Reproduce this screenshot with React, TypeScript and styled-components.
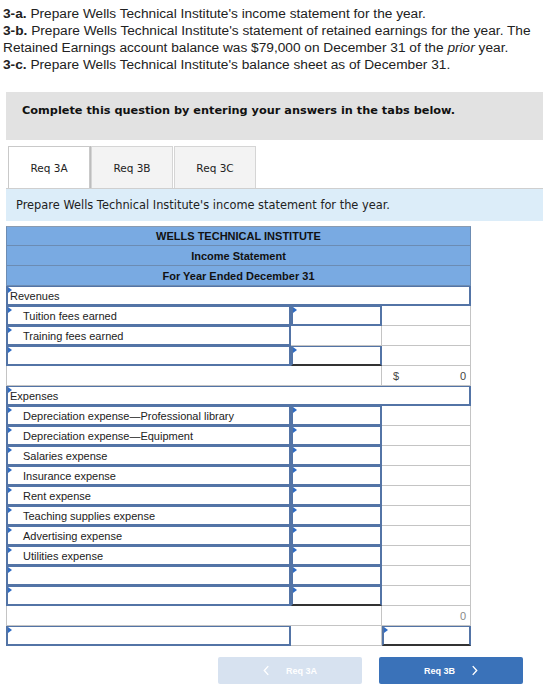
import React from "react";
import styled, { createGlobalStyle, css } from "styled-components";

const GlobalStyle = createGlobalStyle`
  body {
    margin: 0;
    background: #fff;
    font-family: "Liberation Sans", Arial, sans-serif;
    color: #222;
  }
`;

type CellKind = "plain" | "input" | "underline";

interface Row {
  section?: boolean;
  label?: string;
  indent?: boolean;
  labelKind?: "plain" | "input";
  c2?: CellKind;
  c3?: CellKind;
  dollar?: boolean;
  total?: string;
  muted?: boolean;
}

const expenses = [
  "Depreciation expense—Professional library",
  "Depreciation expense—Equipment",
  "Salaries expense",
  "Insurance expense",
  "Rent expense",
  "Teaching supplies expense",
  "Advertising expense",
  "Utilities expense",
];

const rows: Row[] = [
  { section: true, label: "Revenues" },
  { label: "Tuition fees earned", indent: true, labelKind: "input", c2: "input", c3: "plain" },
  { label: "Training fees earned", indent: true, labelKind: "input", c2: "plain", c3: "plain" },
  { label: "", labelKind: "input", c2: "underline", c3: "plain" },
  { label: "", labelKind: "plain", c2: "plain", c3: "plain", dollar: true, total: "0" },
  { section: true, label: "Expenses" },
  ...expenses.map<Row>((e) => ({ label: e, indent: true, labelKind: "input", c2: "input", c3: "plain" })),
  { label: "", labelKind: "input", c2: "input", c3: "plain" },
  { label: "", labelKind: "input", c2: "underline", c3: "plain" },
  { label: "", labelKind: "plain", c2: "plain", c3: "plain", total: "0", muted: true },
  { label: "", labelKind: "input", c2: "plain", c3: "underline" },
];

export default function App() {
  return (
    <Page>
      <GlobalStyle />
      <Prompt>
        <Line>
          <b>3-a.</b> Prepare Wells Technical Institute's income statement for the year.
        </Line>
        <Line>
          <b>3-b.</b> Prepare Wells Technical Institute's statement of retained earnings for the year. The
          Retained Earnings account balance was $79,000 on December 31 of the <i>prior</i> year.
        </Line>
        <Line>
          <b>3-c.</b> Prepare Wells Technical Institute's balance sheet as of December 31.
        </Line>
      </Prompt>

      <Content>
        <Banner>Complete this question by entering your answers in the tabs below.</Banner>

        <Tabs>
          <Tab $active>Req 3A</Tab>
          <Tab>Req 3B</Tab>
          <Tab>Req 3C</Tab>
        </Tabs>

        <InfoBar>Prepare Wells Technical Institute's income statement for the year.</InfoBar>

        <Sheet>
          <HeadRow $first>WELLS TECHNICAL INSTITUTE</HeadRow>
          <HeadRow>Income Statement</HeadRow>
          <HeadRow>For Year Ended December 31</HeadRow>

          {rows.map((r, i) =>
            r.section ? (
              <SheetRow key={i}>
                <SectionCell>{r.label}</SectionCell>
              </SheetRow>
            ) : (
              <SheetRow key={i}>
                <LabelCell $kind={r.labelKind ?? "plain"} $indent={r.indent}>
                  {r.label}
                </LabelCell>
                <AmountCell $kind={r.c2 ?? "plain"} />
                <AmountCell $kind={r.c3 ?? "plain"} $muted={r.muted}>
                  {r.dollar && <Dollar>$</Dollar>}
                  {r.total && <Total>{r.total}</Total>}
                </AmountCell>
              </SheetRow>
            )
          )}
        </Sheet>

        <Nav>
          <NavButton $disabled>
            <Chevron viewBox="0 0 8 12">
              <path d="M6 1 L1.5 6 L6 11" />
            </Chevron>
            Req 3A
          </NavButton>
          <NavButton>
            Req 3B
            <Chevron viewBox="0 0 8 12">
              <path d="M2 1 L6.5 6 L2 11" />
            </Chevron>
          </NavButton>
        </Nav>
      </Content>
    </Page>
  );
}

const Page = styled.div`
  width: 543px;
  overflow: hidden;
  padding-bottom: 16px;
`;

const Prompt = styled.div`
  padding: 5px 0 0 3px;
  font-size: 13.7px;
  line-height: 17px;
  color: #222;
`;

const Line = styled.div`
  b {
    font-weight: bold;
  }
`;

const Content = styled.div`
  padding-left: 6px;
  margin-top: 19px;
`;

const Banner = styled.div`
  background: #e2e2e2;
  height: 48px;
  box-sizing: border-box;
  padding: 12px 0 0 16px;
  font-family: "DejaVu Sans", Verdana, sans-serif;
  font-weight: bold;
  font-size: 11.3px;
  line-height: 14px;
  color: #111;
`;

const Tabs = styled.div`
  display: flex;
  gap: 1px;
  margin: 6px 0 0 2px;
`;

const Tab = styled.div<{ $active?: boolean }>`
  width: 80px;
  height: 41px;
  display: flex;
  align-items: center;
  justify-content: center;
  border: 1px solid #d5d5d5;
  border-bottom: none;
  font-family: "DejaVu Sans", Verdana, sans-serif;
  font-size: 10.5px;
  color: #222;
  background: ${({ $active }) => ($active ? "#fff" : "#f3f3f3")};
  ${({ $active }) =>
    $active &&
    css`
      border-color: #c9c9c9;
      box-shadow: 1px 0 0 #bdbdbd;
    `}
`;

const InfoBar = styled.div`
  background: #dcedf9;
  height: 32px;
  display: flex;
  align-items: center;
  padding-left: 10px;
  font-family: "DejaVu Sans", Verdana, sans-serif;
  font-size: 11.4px;
  color: #222;
  border-top: 1px solid #cfcfcf;
`;

const Sheet = styled.div`
  margin-top: 5px;
  width: 465px;
  font-family: "Liberation Sans", Arial, sans-serif;
  font-size: 11px;
`;

const HeadRow = styled.div<{ $first?: boolean }>`
  height: 20px;
  box-sizing: border-box;
  background: #79aae2;
  border: 1px solid #6c8cb3;
  border-top: ${({ $first }) => ($first ? "1px solid #8a9bb0" : "none")};
  display: flex;
  align-items: center;
  justify-content: center;
  font-weight: bold;
  color: #111;
`;

const SheetRow = styled.div`
  display: grid;
  grid-template-columns: 285px 91px 89px;
  height: 20px;
`;

const marker = css`
  &::before {
    content: "";
    position: absolute;
    left: 0;
    top: 0;
    border-top: 3px solid transparent;
    border-bottom: 3px solid transparent;
    border-left: 4px solid #2f6cc4;
  }
`;

const SectionCell = styled.div`
  grid-column: 1 / 4;
  position: relative;
  box-sizing: border-box;
  border: 2px solid #5374a6;
  border-top-width: 1px;
  background: #fff;
  padding-left: 2px;
  display: flex;
  align-items: center;
  color: #222;
  ${marker}
`;

const LabelCell = styled.div<{ $kind: "plain" | "input"; $indent?: boolean }>`
  position: relative;
  box-sizing: border-box;
  display: flex;
  align-items: center;
  padding-left: ${({ $indent }) => ($indent ? "15px" : "4px")};
  color: #222;
  white-space: nowrap;
  ${({ $kind }) =>
    $kind === "input"
      ? css`
          border: 2px solid #5374a6;
          border-top-width: 1px;
          ${marker}
        `
      : css`
          border-left: 1px solid #c4c4c4;
          border-bottom: 1px solid #c4c4c4;
        `}
`;

const AmountCell = styled.div<{ $kind: CellKind; $muted?: boolean }>`
  position: relative;
  box-sizing: border-box;
  display: flex;
  align-items: center;
  justify-content: space-between;
  padding: 0 4px 0 11px;
  color: ${({ $muted }) => ($muted ? "#888" : "#444")};
  border-right: 1px solid #c4c4c4;
  border-bottom: 1px solid #c4c4c4;
  ${({ $kind }) =>
    $kind !== "plain" &&
    css`
      border: 2px solid #5374a6;
      border-top-width: 1px;
      ${marker}
    `}
  ${({ $kind }) =>
    $kind === "underline" &&
    css`
      border-bottom: 2px solid #333;
    `}
`;

const Dollar = styled.span`
  color: #444;
`;

const Total = styled.span`
  margin-left: auto;
  color: inherit;
`;

const Nav = styled.div`
  display: flex;
  justify-content: flex-end;
  gap: 17px;
  margin: 11px 20px 0 0;
`;

const NavButton = styled.div<{ $disabled?: boolean }>`
  width: 144px;
  height: 27px;
  border-radius: 2px;
  display: flex;
  align-items: center;
  justify-content: center;
  gap: 16px;
  font-size: 9px;
  font-weight: bold;
  color: #fff;
  background: ${({ $disabled }) => ($disabled ? "#d7e2f0" : "#3a72b9")};
`;

const Chevron = styled.svg`
  width: 7px;
  height: 11px;
  fill: none;
  stroke: #fff;
  stroke-width: 1.6;
`;
